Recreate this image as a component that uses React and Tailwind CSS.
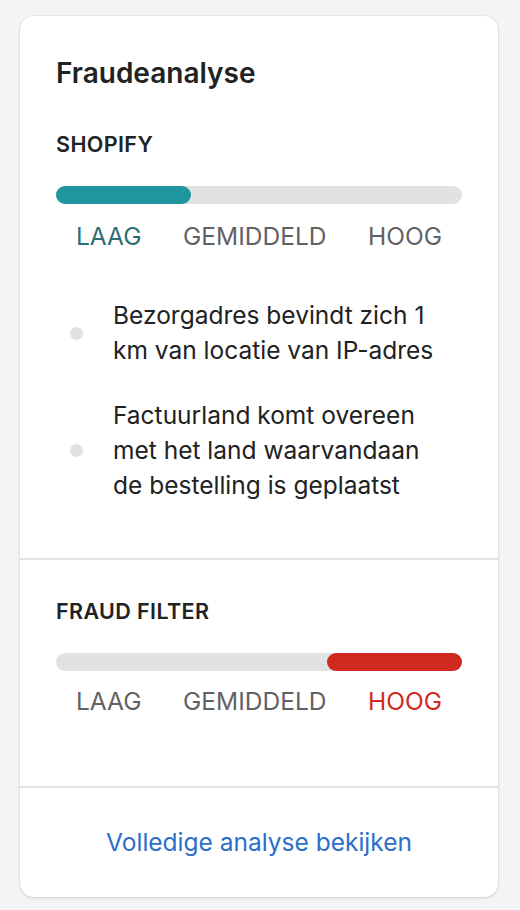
import React from "react";

const levels = ["LAAG", "GEMIDDELD", "HOOG"];

const RiskMeter = ({ active, gap = "mt-[15px]" }) => {
  const fill =
    active === 0
      ? "left-0 w-1/3 bg-[#1f969e]"
      : active === 2
      ? "right-0 w-1/3 bg-[#d0291d]"
      : "left-1/3 w-1/3 bg-[#e0b43a]";
  const activeText = active === 0 ? "text-[#2b6f74]" : "text-[#d0291d]";

  return (
    <div>
      <div className="relative mt-[28px] h-[18px] rounded-full bg-[#e1e2e4]">
        <div className={`absolute top-0 h-full rounded-full ${fill}`} />
      </div>
      <div className={`${gap} flex justify-between px-[20px] text-[24.5px] leading-[35px]`}>
        {levels.map((label, i) => (
          <span key={label} className={i === active ? activeText : "text-[#5f6265]"}>
            {label}
          </span>
        ))}
      </div>
    </div>
  );
};

const Subheading = ({ children }) => (
  <h3 className="text-[21.5px] font-semibold leading-[28px] tracking-[0.4px] text-[#202223] uppercase">
    {children}
  </h3>
);

const reasons = [
  "Bezorgadres bevindt zich 1 km van locatie van IP-adres",
  "Factuurland komt overeen met het land waarvandaan de bestelling is geplaatst",
];

export default function App() {
  return (
    <div
      className="min-h-[910px] bg-[#f4f4f6] px-5 pt-4 pb-4"
      style={{ fontFamily: "Inter, 'Noto Sans', sans-serif" }}
    >
      <div className="w-[478px] overflow-hidden rounded-[14px] bg-white shadow-[0_1px_3px_rgba(0,0,0,0.14),0_0_0_1px_rgba(63,63,68,0.04)]">
        <section className="px-[36px] pt-[36px] pb-[55px]">
          <h2 className="text-[28px] font-semibold leading-[42px] text-[#202223]">Fraudeanalyse</h2>
          <div className="mt-[36px]">
            <Subheading>Shopify</Subheading>
            <RiskMeter active={0} />
          </div>
          <ul className="mt-[44px] flex flex-col gap-[30px]">
            {reasons.map((text) => (
              <li key={text} className="flex items-center">
                <span className="ml-[14px] h-[13px] w-[13px] shrink-0 rounded-full bg-[#dfe1e4]" />
                <span className="ml-[30px] w-[325px] text-[24.5px] leading-[35px] text-[#202223]">
                  {text}
                </span>
              </li>
            ))}
          </ul>
        </section>

        <section className="border-t-2 border-[#e1e3e5] px-[36px] pt-[37px] pb-[67px]">
          <Subheading>Fraud filter</Subheading>
          <RiskMeter active={2} gap="mt-[13px]" />
        </section>

        <section className="border-t-2 border-[#e1e3e5] pt-[37px] pb-[37px] text-center">
          <a href="#" className="text-[24.5px] leading-[35px] text-[#2c6ecb]">
            Volledige analyse bekijken
          </a>
        </section>
      </div>
    </div>
  );
}
